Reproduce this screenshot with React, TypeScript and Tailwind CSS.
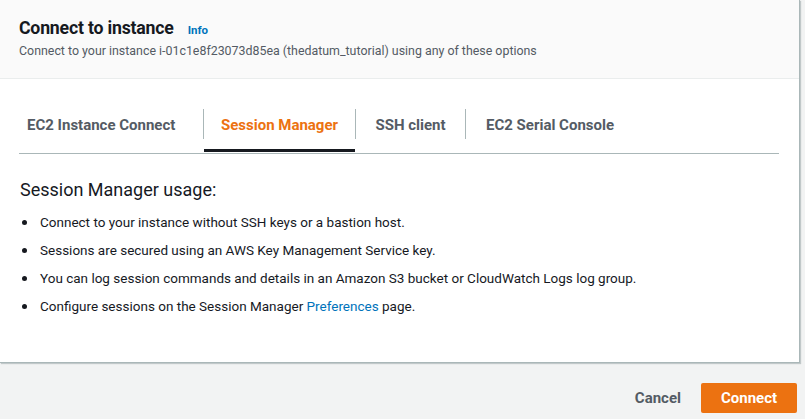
import React from 'react';

const tabs = [
  { label: 'EC2 Instance Connect', cls: 'w-[184px] pl-[8px] justify-start' },
  { label: 'Session Manager', cls: 'w-[151px] justify-center' },
  { label: 'SSH client', cls: 'w-[109px] justify-center' },
  { label: 'EC2 Serial Console', cls: 'pl-[20px] justify-start' },
];

function Bullet({ children }: { children: React.ReactNode }) {
  return (
    <li className="flex items-center">
      <span className="w-[20px] pl-[2px]">
        <span className="block h-[5px] w-[5px] rounded-full bg-[#16191f]" />
      </span>
      <span>{children}</span>
    </li>
  );
}

export default function App() {
  const active = 1;

  return (
    <div className="h-[419px] w-[805px] bg-[#f2f3f3] font-['Roboto',sans-serif] text-[#16191f] overflow-hidden">
      {/* Panel */}
      <div className="w-[800px] h-[363px] bg-white border-r border-b border-[#aab7b8] shadow-[1px_1px_1px_rgba(0,28,36,0.2)]">
        {/* Header */}
        <div className="h-[79px] bg-[#fafafa] border-b border-[#eaeded] px-[19px] pt-[16px]">
          <div className="flex items-baseline">
            <h2 className="text-[17.7px] font-bold leading-[24px] tracking-[-0.2px]">Connect to instance</h2>
            <a className="ml-[14px] text-[11.5px] font-bold text-[#0073bb]">Info</a>
          </div>
          <p className="mt-[3px] text-[12.4px] leading-[16px] text-[#545b64]">
            Connect to your instance i-01c1e8f23073d85ea (thedatum_tutorial) using any of these options
          </p>
        </div>

        {/* Tabs */}
        <div className="pt-[28px] pl-[19px] pr-[20px]">
          <div className="flex border-b-[1.5px] border-[#aab7b8] h-[47px]">
            {tabs.map((t, i) => (
              <div key={t.label} className="flex items-stretch">
                {i > 0 && <div className="w-px bg-[#aab7b8] my-[2px] h-[30px]" />}
                <div
                  className={`flex h-[45px] items-start pt-[7px] text-[15px] font-bold whitespace-nowrap ${t.cls} ${
                    i === active ? 'text-[#ec7211] border-b-[3px] border-[#16191f]' : 'text-[#545b64]'
                  }`}
                >
                  {t.label}
                </div>
              </div>
            ))}
          </div>
        </div>

        {/* Content */}
        <div className="px-[20px] pt-[24px]">
          <h3 className="text-[18px] leading-[24px] font-normal">Session Manager usage:</h3>
          <ul className="mt-[11px] space-y-[9px] text-[13.5px] leading-[19px]">
            <Bullet>Connect to your instance without SSH keys or a bastion host.</Bullet>
            <Bullet>Sessions are secured using an AWS Key Management Service key.</Bullet>
            <Bullet>You can log session commands and details in an Amazon S3 bucket or CloudWatch Logs log group.</Bullet>
            <Bullet>
              Configure sessions on the Session Manager <a className="text-[#0073bb]">Preferences</a> page.
            </Bullet>
          </ul>
        </div>
      </div>

      {/* Footer */}
      <div className="flex items-center justify-end pr-[8px] pt-[20px]">
        <button className="px-[20px] text-[15px] font-bold text-[#545b64]">Cancel</button>
        <button className="h-[30px] w-[96px] rounded-[2px] bg-[#ec7211] text-[15px] font-bold text-white">
          Connect
        </button>
      </div>
    </div>
  );
}
